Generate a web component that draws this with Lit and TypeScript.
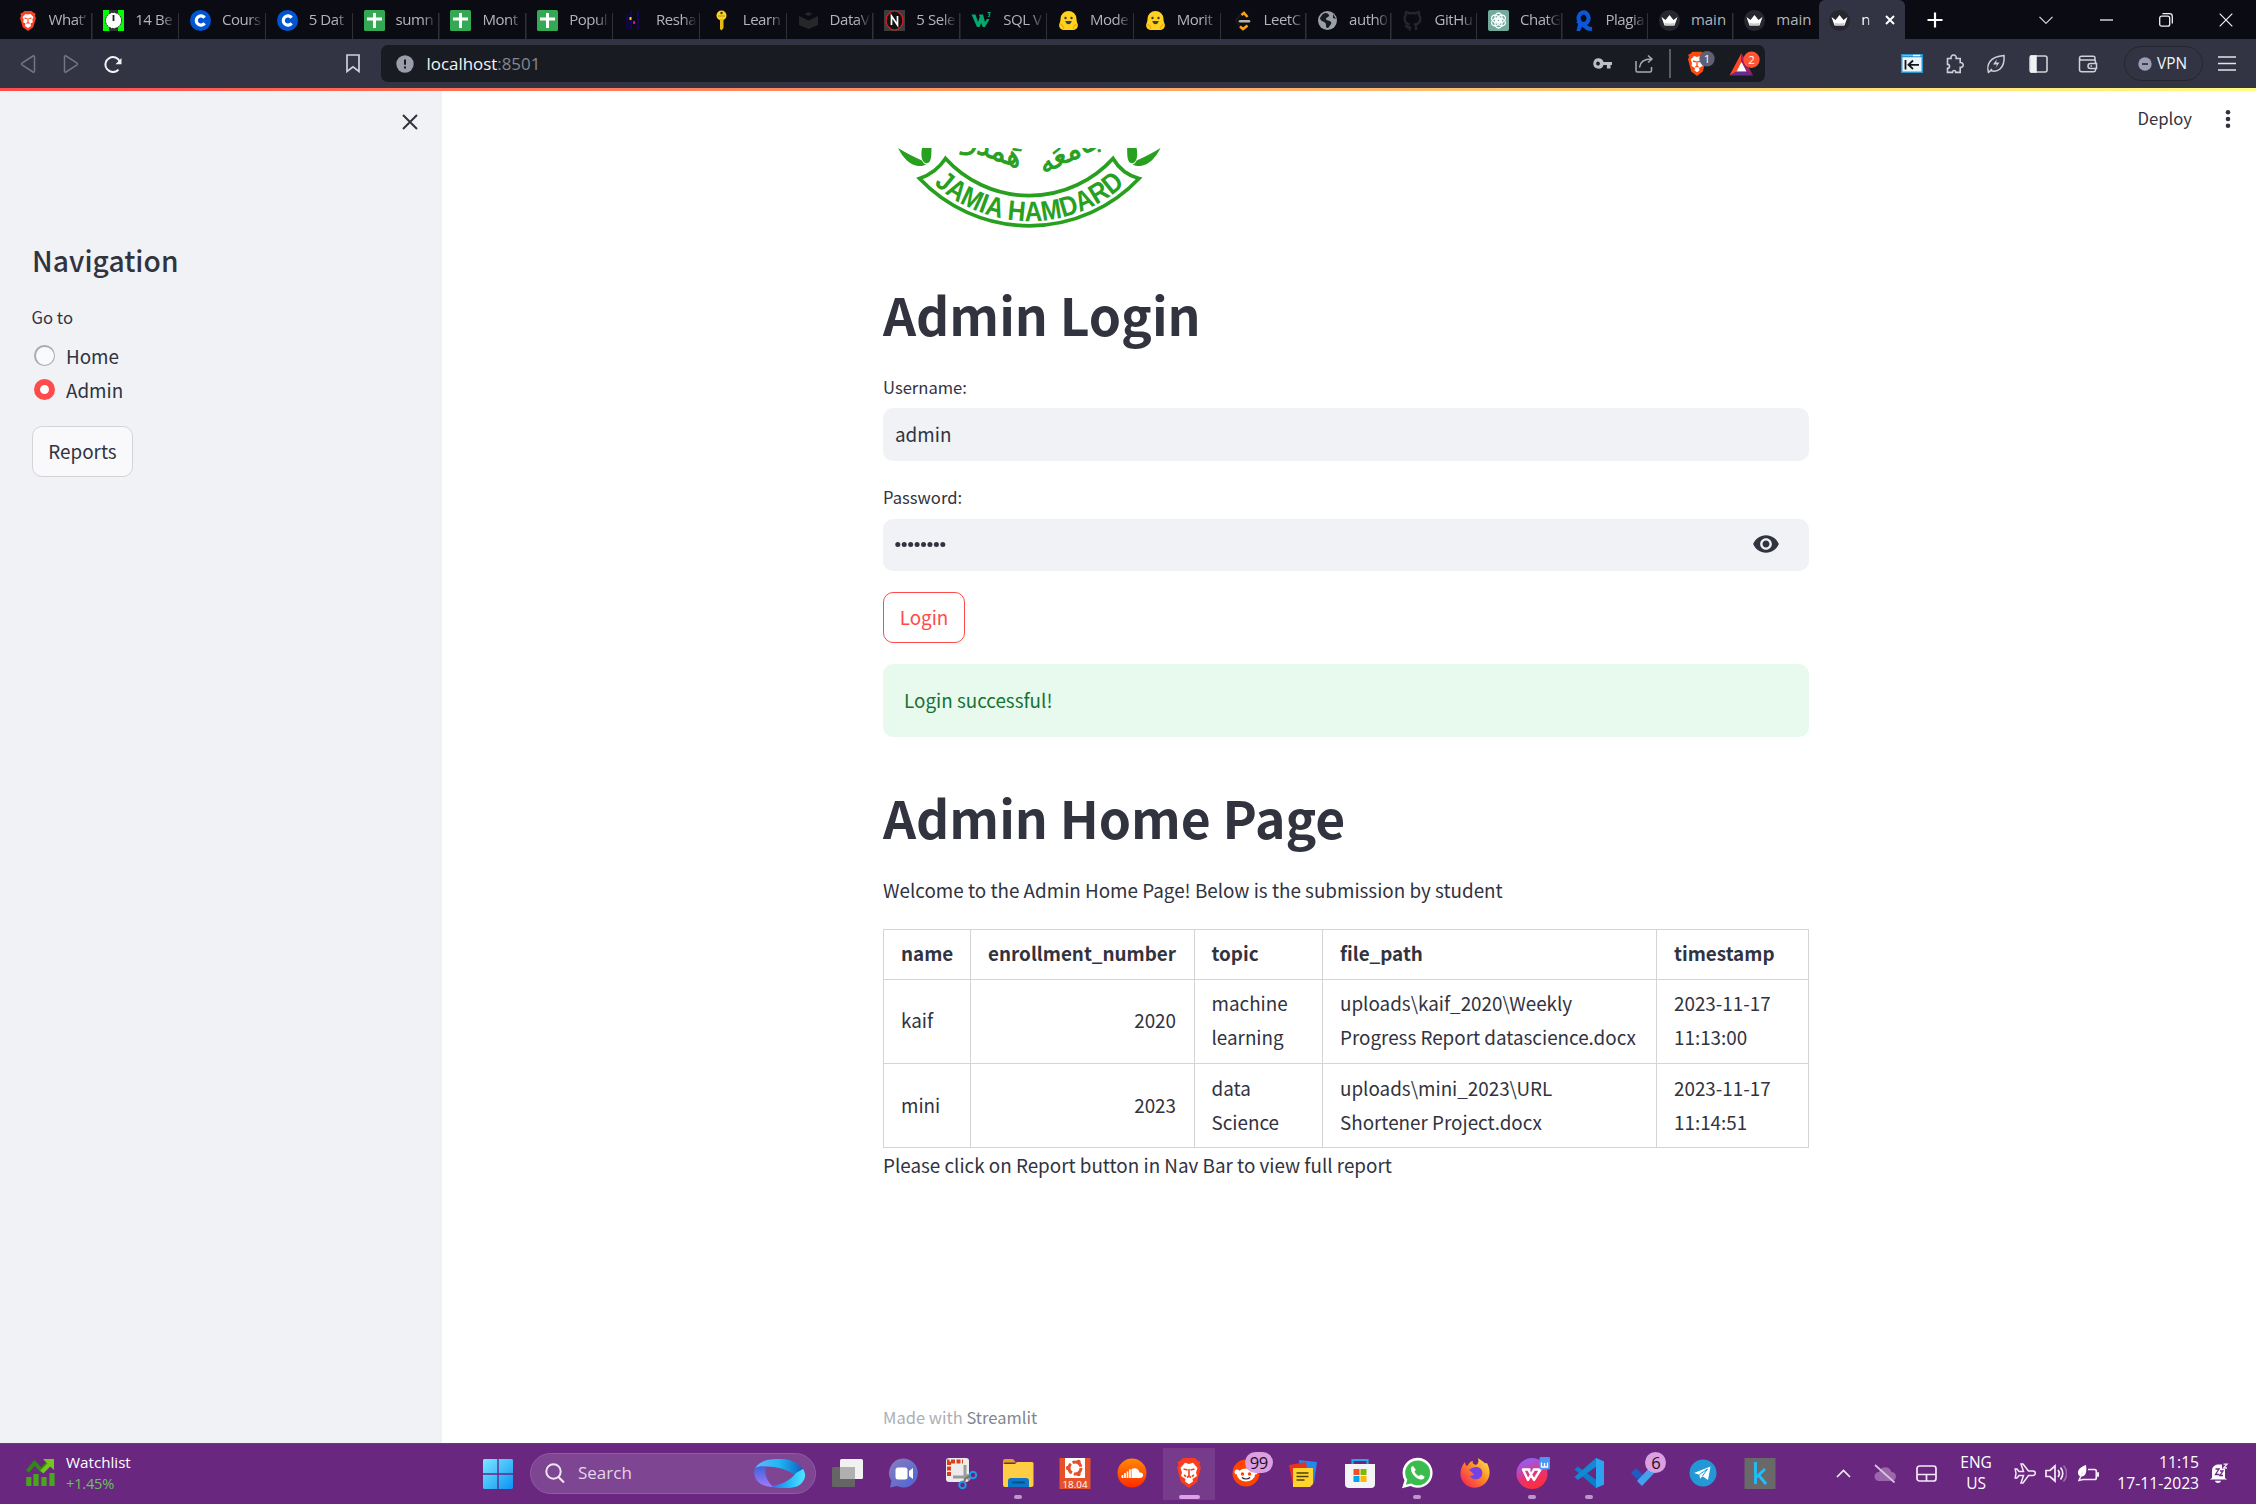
import { LitElement, html, svg, css, TemplateResult, SVGTemplateResult } from 'lit';
import { customElement } from 'lit/decorators.js';
import { classMap } from 'lit/directives/class-map.js';

const icon = (w: number, h: number, box: string, body: SVGTemplateResult, cls = 'ico') =>
  html`<svg class=${cls} width=${w} height=${h} viewBox=${box} fill="none">${body}</svg>`;

/* ---------- tab favicons, 21px square ---------- */
const lion = svg`<path d="M5 3 7.5 1h7L17 3l1.6.4L18 6l1 2-2.800 9.200L11 21l-5.200-3.800L3 8l1-2-.6-2.600z" fill="#fb4023"/><path d="M11 4.500 8.500 4 5.500 7l1.300 3L6 12l2.500 1.500L8 16l3 2 3-2-.5-2.500L16 12l-.8-2 1.300-3-3-3z" fill="#fff"/><path d="m7.500 8 2.200.6M14.500 8l-2.200.6M11 8v4.500l-1.500 1M11 12.500l1.500 1" stroke="#fb4023" stroke-width="1.100"/>`;
const cBadge = svg`<circle cx="10.500" cy="10.500" r="10.500" fill="#0056d2"/><path d="M14.600 7.800a4.600 4.600 0 1 0 0 5.400" stroke="#fff" stroke-width="3.200"/>`;
const sheet = svg`<rect width="21" height="21" rx="1.500" fill="#34a853"/><path d="M10.500 3v15M3 9h15" stroke="#fff" stroke-width="3"/>`;
const hug = svg`<path d="M10.500 1a8 8 0 0 1 8 8c0 2 .5 3 1.200 5 .8 3-1.200 5.500-4 6H5.300c-2.800-.5-4.800-3-4-6C2 12 2.500 11 2.500 9a8 8 0 0 1 8-8z" fill="#ffd21e"/><path d="M2.500 14c1.500 1 3 2 3.200 5M18.500 14c-1.500 1-3 2-3.200 5" stroke="#ff9d0b" stroke-width="1.200"/><circle cx="7.500" cy="8" r="1.200" fill="#3a3b45"/><circle cx="13.500" cy="8" r="1.200" fill="#3a3b45"/><path d="M7.300 11h6.400c-.3 2-1.500 3.200-3.200 3.200S7.600 13 7.300 11z" fill="#3a3b45"/>`;
const crown = svg`<circle cx="10.500" cy="10.500" r="10.500" fill="#26272f"/><path d="m2.500 7 4 3 4-5 4 5 4-3-3 8.500h-10z" fill="#fff"/><path d="m5.500 13 5 .5 5-.5-.5 2.500h-9z" fill="#c9c9cc"/>`;

const favicons: Record<string, SVGTemplateResult> = {
  lion, cBadge, sheet, hug, crown,
  watch: svg`<rect width="21" height="21" fill="#0f0"/><path d="M6 0h9v4H6zM6 17h9v4H6z" fill="#333"/><circle cx="10.500" cy="10.500" r="8" fill="#fff" stroke="#222" stroke-width="1" stroke-dasharray="2 1"/><path d="M10.500 5v6" stroke="#222" stroke-width="1.800"/>`,
  panda: svg`<path d="M3.500 5v14M7 1v19M14 1v19" stroke="#150458" stroke-width="2"/><rect x="5.500" y="7" width="2" height="3" fill="#ffca00"/><rect x="9" y="11" width="2" height="3" fill="#e70488"/>`,
  key: svg`<circle cx="10.500" cy="5.500" r="5" fill="#f8d32a"/><circle cx="10.500" cy="3" r="1.200" fill="#4a3a00"/><path d="M9 9h3.500v9l-2 2.500L9 19z" fill="#e3b912"/><path d="M7 6h7" stroke="#b8900a"/>`,
  book: svg`<path d="m10.500 2 4 2-4 2-4-2zM1 6l9.500 4.500L20 6v9l-9.500 4L1 15z" fill="#26272a"/>`,
  nTile: svg`<rect width="21" height="21" fill="#3c3c3e"/><ellipse cx="10.500" cy="10.500" rx="8.500" ry="9.500" fill="#111" stroke="#e31c23" stroke-width="1.200"/><path d="M7.500 15V6l6 9V6" stroke="#fff" stroke-width="1.700"/>`,
  w3: svg`<path d="M.5 4.500h4L7 12l1.800-5L8 4.500h4l2 7.500 2-3h2.500L14 17h-2.300l-1.500-4L8.500 17H6z" fill="#04aa6d"/><path d="M16.500 2.500h2.500l-1.200 1.700c1.500.4 1.200 2.500-.8 2.300" stroke="#04aa6d" stroke-width="1.100"/>`,
  leet: svg`<path d="m12.500 1-7.500 7.500c-1 1.200-1 3 0 4.200L9.500 18" stroke="#17171a" stroke-width="2.500"/><path d="m9.500 5 2.500-2 3.500 4M8 16.500l3 2.500 4.500-3.500" stroke="#ffa116" stroke-width="2.600"/><path d="M8 11.200h9" stroke="#b3b3b3" stroke-width="2.600" stroke-linecap="round"/>`,
  globe: svg`<circle cx="10.500" cy="10.500" r="9.500" fill="#9aa0a8"/><path d="M5 5c3-3 6-2 7 0s-3 2-3 4 4 1 5 3-1 3-2 5-3 1-3-1 0-3-2-4-4-2-4-4zM16 4l3 5-3-1z" fill="#191a22"/>`,
  github: svg`<path d="M7 20c1-.5 1-1 1-2.500-3 .3-4-1.500-4.500-2.500M14 20v-3.500c0-1-.2-1.500-.7-2 2.700-.4 5-1.600 5-6 0-1.500-.5-2.600-1.300-3.500.2-.7.200-2-.2-3-1.200 0-2.600.8-3.300 1.400a13 13 0 0 0-6 0C6.800 2.800 5.400 2 4.200 2c-.4 1-.4 2.300-.2 3C3.200 5.900 2.700 7 2.700 8.500c0 4.400 2.300 5.600 5 6" stroke="#24272e" stroke-width="2.400"/>`,
  gpt: svg`<rect width="21" height="21" rx="2" fill="#74aa9c"/><g stroke="#fff" stroke-width="1.300"><ellipse cx="10.500" cy="7.500" rx="3.500" ry="4.500"/><ellipse cx="10.500" cy="7.500" rx="3.500" ry="4.500" transform="rotate(60 10.500 10.500)"/><ellipse cx="10.500" cy="7.500" rx="3.500" ry="4.500" transform="rotate(120 10.500 10.500)"/><ellipse cx="10.500" cy="7.500" rx="3.500" ry="4.500" transform="rotate(180 10.500 10.500)"/><ellipse cx="10.500" cy="7.500" rx="3.500" ry="4.500" transform="rotate(240 10.500 10.500)"/><ellipse cx="10.500" cy="7.500" rx="3.500" ry="4.500" transform="rotate(300 10.500 10.500)"/></g>`,
  quill: svg`<path d="M10 14a5 5.800 0 1 1 4-1.500c-1 1-3 1.500-5 1.500l6 4.500 4 .5" stroke="#0b57d8" stroke-width="4.200"/><path d="m3.500 21 2-9 5 2-3.500 7z" fill="#0b57d8"/>`,
};

interface Tab { label: string; fav: string; }
const tabs: Tab[] = [
  ['What’', 'lion'], ['14 Be', 'watch'], ['Cours', 'cBadge'], ['5 Dat', 'cBadge'], ['sumn', 'sheet'],
  ['Mont', 'sheet'], ['Popul', 'sheet'], ['Resha', 'panda'], ['Learn', 'key'], ['DataV', 'book'],
  ['5 Sele', 'nTile'], ['SQL V', 'w3'], ['Mode', 'hug'], ['Morit', 'hug'], ['LeetC', 'leet'],
  ['auth0', 'globe'], ['GitHu', 'github'], ['ChatG', 'gpt'], ['Plagia', 'quill'], ['main', 'crown'], ['main', 'crown'],
].map(([label, fav]) => ({ label, fav }));

@customElement('browser-tabs')
export class BrowserTabs extends LitElement {
  static styles = css`
    :host { display: flex; height: 39px; background: #0b0b14; font: 15px/20px "Open Sans", sans-serif; color: #b4b4b9; }
    .tab { box-sizing: border-box; flex: none; display: flex; width: 86.800px; padding: 10px 0 0 10.500px; }
    .tab.first { width: 92.700px; padding-left: 16.500px; }
    .tab.slim { width: 85.480px; }
    .tab { background: linear-gradient(#303137, #303137) right 13px / 1.500px 26px no-repeat; }
    .tab.last { background: none; }
    .label { width: 41px; margin: -1px 0 0 11px; overflow: visible; white-space: nowrap; letter-spacing: -0.450px;
      -webkit-mask-image: linear-gradient(90deg, #000 66%, transparent); mask-image: linear-gradient(90deg, #000 66%, transparent); }
    .whole .label { letter-spacing: 0; -webkit-mask-image: none; mask-image: none; }
    .active { box-sizing: border-box; display: flex; width: 86px; padding: 10px 0 0 10px; background: #323443; border-radius: 6px 6px 0 0; color: #fff; }
    .active .label { width: 10px; margin-right: 14px; }
    .ctl { display: flex; align-items: center; justify-content: center; width: 60px; }
    .plus { margin-right: 51px; }
    .x { margin-top: 5px; }
    .win { stroke: #f0f0f2; stroke-width: 1.300; }
  `;
  render() {
    return html`
      ${tabs.map((t, i) => html`
        <div class=${classMap({ tab: true, first: i === 0, slim: i > 13, last: i === 20, whole: i > 18 })}>
          ${icon(21, 21, '0 0 21 21', favicons[t.fav])}
          <span class="label">${t.label}</span>
        </div>`)}
      <div class="active">${icon(21, 21, '0 0 21 21', crown)}<span class="label">n</span>
        ${icon(10, 10, '0 0 10 10', svg`<path d="m1 1 8 8M9 1 1 9" stroke="#fff" stroke-width="2"/>`, 'x')}</div>
      <div class="ctl plus">${icon(16, 16, '0 0 16 16', svg`<path d="M8 .5v15M.5 8h15" stroke="#fff" stroke-width="2.200"/>`)}</div>
      <div class="ctl">${icon(14, 8, '0 0 14 8', svg`<path d="m.5.8 6.500 6.500 6.500-6.500" stroke="#dcdce0" stroke-width="1.200"/>`)}</div>
      <div class="ctl">${icon(13, 4, '0 0 13 4', svg`<path d="M0 2h13" stroke="#f0f0f2" stroke-width="1.300"/>`)}</div>
      <div class="ctl">${icon(14, 14, '0 0 14 14', svg`<rect x=".7" y="3.200" width="10" height="10" rx="2"/><path d="M3.500.7h7a2.800 2.800 0 0 1 2.800 2.800v7" />`, 'ico win')}</div>
      <div class="ctl">${icon(14, 14, '0 0 14 14', svg`<path d="m.7.700 12.600 12.600M13.300.700.700 13.300" stroke="#f0f0f2" stroke-width="1.200"/>`)}</div>
    `;
  }
}

@customElement('browser-toolbar')
export class BrowserToolbar extends LitElement {
  static styles = css`
    :host { display: flex; box-sizing: border-box; height: 49px; padding: 6px 0 0 7px; background: #323443; font: 17.200px/37px "Open Sans", sans-serif; }
    .slot { flex: none; display: flex; align-items: center; justify-content: center; width: 42.500px; height: 37px; stroke: #d0d1d8; stroke-width: 1.500; }
    .dim { stroke: #727482; }
    .mark { margin-left: 197px; }
    .field { display: flex; align-items: center; box-sizing: border-box; width: 1384px; height: 37px; margin: 0 126.500px 0 6.500px; padding: 0 4px 0 15px; border-radius: 7px; background: #191b22; color: #f4f4f6; }
    .url { flex: 1; margin: -1px 0 0 13px; font-size: 16.900px; }
    .port { color: #85868e; }
    .f { display: flex; align-items: center; justify-content: center; width: 42.500px; }
    .rule { width: 1.500px; height: 29px; margin: 0 15px 0 3px; background: #5a5c64; }
    .shield { display: flex; margin-right: 14px; }
    .rewards { display: flex; padding-top: 2px; }
    .ext { width: 42px; }
    .wallet { margin-left: 8px; }
    .vpn { flex: none; box-sizing: border-box; display: flex; align-items: center; gap: 5px; width: 79px; height: 35px; margin: 1px 3px 0 15px; padding-left: 13px; border: 1.500px solid #24252f; border-radius: 18px; color: #f4f4f6; font-size: 15.400px; }
  `;
  render() {
    return html`
      <div class="slot dim">${icon(16, 18, '0 0 16 18', svg`<path d="M13 1 2 8.200a1 1 0 0 0 0 1.600L13 17c.7.400 1.500 0 1.500-.8V1.800C14.500 1 13.700.600 13 1z"/>`)}</div>
      <div class="slot dim">${icon(16, 18, '0 0 16 18', svg`<path d="m3 1 11 7.200a1 1 0 0 1 0 1.600L3 17c-.7.400-1.500 0-1.500-.8V1.800C1.500 1 2.300.600 3 1z"/>`)}</div>
      <div class="slot">${icon(19, 18, '0 0 19 18', svg`<path d="M14.500 14.600A7.500 7.500 0 1 1 16 7" stroke="#f2f2f4" stroke-width="2"/><path d="M17.500 3v6.200h-6z" fill="#f2f2f4" stroke="none"/>`)}</div>
      <div class="slot mark">${icon(14, 19, '0 0 14 19', svg`<path d="M1 1h12v16.500l-6-4.700-6 4.700z" stroke-width="1.700"/>`)}</div>
      <div class="field">
        ${icon(18, 18, '0 0 18 18', svg`<circle cx="9" cy="9" r="8.700" fill="#9b9da8"/><path d="M9 4.500v5.200M9 11.500v2" stroke="#191b22" stroke-width="2"/>`)}
        <span class="url">localhost<span class="port">:8501</span></span>
        <div class="f">${icon(19, 11, '0 0 19 11', svg`<path d="M5.500.3a5.200 5.200 0 0 1 5 3.700H19v3h-1.500v3.500h-3.600V7h-3.400A5.200 5.200 0 1 1 5.500.3zm0 3.400a1.900 1.900 0 1 0 0 3.700 1.900 1.900 0 0 0 0-3.700z" fill="#bdbec4"/>`)}</div>
        <div class="f">${icon(19, 19, '0 0 19 19', svg`<path d="M1 7v9.500c0 1 .5 1.500 1.500 1.500h12.500c1 0 1.500-.5 1.500-1.500V13M4.500 13.500c.5-5.500 4-8.500 12-8.500M13 1.500 17 5l-4 3.500" stroke="#a9aab2" stroke-width="1.500"/>`)}</div>
        <div class="rule"></div>
        <div class="shield">${icon(29, 26, '0 0 29 26', svg`<path d="M4 3 6.500.800h9L18 3l1.800.6-.8 2.600 1 2-3.200 12.300L11 25l-5.800-4.500L2 8.200l1-2-.8-2.600z" fill="#fb4b0d"/><path d="M11 6 8 5 4.700 8.500 6 12l-.5 3L9 17l-.5 2.500L11 21.300l2.500-1.800L13 17l3.500-2-.5-3 1.300-3.500L14 5z" fill="#fff"/><path d="m7 10 3 .8m5-.8-3 .8M11 10v5l-1.600 1.200M11 15l1.600 1.200" stroke="#fb4b0d" stroke-width="1.300"/><circle cx="21" cy="7.800" r="7.700" fill="#5e6175"/><text x="21" y="12" font-size="11.500" fill="#fff" text-anchor="middle">1</text>`)}</div>
        <div class="rewards">${icon(32, 28, '0 0 32 28', svg`<path d="M12.500 2v10.500L8 20.500.500 24.500z" fill="#ff4724"/><path d="M12.500 2 24 24.500l-7.300-4-4.200-8z" fill="#9e1f63"/><path d="m.5 24.500 7.500-4h9l7 4z" fill="#662d91"/><path d="m12.500 11 5 9.500h-10z" fill="#fff"/><circle cx="22.500" cy="8.800" r="8.200" fill="#ff5533"/><text x="22.500" y="13" font-size="11.500" fill="#fff" text-anchor="middle">2</text>`)}</div>
      </div>
      <div class="slot ext">${icon(22, 19, '0 0 22 19', svg`<rect x=".7" y=".7" width="20.600" height="17.600" fill="#e9f4f9" stroke="#2b93c9"/><path d="M1 2.500h20" stroke="#2b93c9" stroke-width="1.500"/><path d="M12 1.500h7" stroke="#fff"/><path d="M4.500 6v9.500M18 10.800H8M12 6.500 7.500 10.800 12 15" stroke="#151515" stroke-width="1.800"/>`)}</div>
      <div class="slot ext">${icon(20, 20, '0 0 20 20', svg`<path d="M3.500 4.500H7a2.700 2.700 0 1 1 5.200 0h4v4a2.500 2.500 0 1 1 0 4.900v5h-4.500c.3-2.600-3.300-2.600-3.200 0h-5v-4.200c2.700 0 2.700-3.600 0-3.800z" stroke-width="1.600"/>`)}</div>
      <div class="slot ext">${icon(20, 20, '0 0 20 20', svg`<path d="M2.500 18.500c-1-3-.8-8 1.500-11 3-4 8-5.500 14-6 .5 6-.5 10.500-4 13.500-3 2.500-6.500 2.500-9.500 1.500M2 19l4-4"/><path d="m11 5-4 5.500h4L9.500 14l4-5.500h-3.500z" fill="#d0d1d8" stroke="none"/>`)}</div>
      <div class="slot ext">${icon(19, 18, '0 0 19 18', svg`<rect x="1" y="1" width="17" height="16" rx="2" stroke-width="1.600"/><path d="M2 1h5v16H2z" fill="#f2f2f4" stroke="#f2f2f4"/>`)}</div>
      <div class="slot ext wallet">${icon(20, 18, '0 0 20 18', svg`<path d="M17 5V3c0-1-.7-1.800-1.800-1.800H3.500a2 2 0 0 0-2 1.800v11.500a2.300 2.300 0 0 0 2.300 2.300h12c1 0 1.700-.7 1.700-1.700v-1.500M1.500 3.200c0 1 1 1.800 2 1.800h12.200c1.200 0 1.800.6 1.800 1.700v1.500M18.500 8.500h-6a2.500 2.500 0 0 0 0 5h6z"/><path d="M12.500 11h1.500"/>`)}</div>
      <div class="vpn">${icon(14, 14, '0 0 14 14', svg`<circle cx="7" cy="7" r="6.700" fill="#9a9db3"/><path d="M4 7h6" stroke="#323443" stroke-width="1.800"/>`)}<span>VPN</span></div>
      <div class="slot ext">${icon(18, 15, '0 0 18 15', svg`<path d="M0 1h18M0 7.500h18M0 14h18" stroke="#e4e4e8"/>`)}</div>
    `;
  }
}

@customElement('side-nav')
export class SideNav extends LitElement {
  static styles = css`
    :host { flex: none; display: block; box-sizing: border-box; width: 442px; padding: 17px 25px 0 32px; background: #f0f2f6; color: #31333f; font: 18.840px/34px "Noto Sans CJK SC", sans-serif; }
    .top { display: flex; justify-content: flex-end; height: 28px; align-items: center; margin-right: -1px; }
    h2 { margin: 104px 0 0; height: 40px; font-size: 28.200px; line-height: 40px; font-weight: 500; letter-spacing: 0.050px; }
    .cap { height: 26px; margin: 23.500px 0 9px -0.500px; font-size: 16.700px; line-height: 26px; }
    .opt { display: flex; align-items: center; height: 34px; padding-left: 2px; gap: 11px; }
    .radio { box-sizing: border-box; width: 21px; height: 21px; border-radius: 50%; background: #fafafc; border: 1.500px solid #a9abb1; border-top-width: 2px; border-left-width: 2px; }
    .on { border: 6.500px solid #ff4b4b; background: #fff; }
    button { display: block; box-sizing: border-box; width: 101px; height: 51px; margin-top: 19.500px; padding: 0 0 1px; border: 1px solid #d3d4d8; border-radius: 10px; background: #f9f9fb; color: inherit; font: inherit; }
  `;
  render() {
    return html`
      <div class="top">${icon(16, 16, '0 0 16 16', svg`<path d="m1 1 14 14M15 1 1 15" stroke="#31333f" stroke-width="2"/>`)}</div>
      <h2>Navigation</h2>
      <div class="cap">Go to</div>
      <div class="opt"><span class="radio"></span>Home</div>
      <div class="opt"><span class="radio on"></span>Admin</div>
      <button>Reports</button>
    `;
  }
}

const rows = [
  ['kaif', '2020', 'machine\nlearning', 'uploads\\kaif_2020\\Weekly\nProgress Report datascience.docx', '2023-11-17\n11:13:00'],
  ['mini', '2023', 'data\nScience', 'uploads\\mini_2023\\URL\nShortener Project.docx', '2023-11-17\n11:14:51'],
];

@customElement('admin-page')
export class AdminPage extends LitElement {
  static styles = css`
    :host { flex: 1; display: block; background: #fff; color: #31333f; font: 18.840px/34px "Noto Sans CJK SC", sans-serif; }
    .header { display: flex; justify-content: flex-end; align-items: center; box-sizing: border-box; height: 57px; padding: 0 25px 2px 0; gap: 33px; font-size: 16.700px; }
    .header span { margin-top: -1px; }
    .block { width: 926px; margin-left: 441px; }
    .logo { display: block; overflow: hidden; }
    h1 { margin: 48.500px 0 0; height: 70px; font-size: 51.650px; line-height: 70px; font-weight: 700; }
    h1.second { margin-top: 45.500px; }
    .cap { height: 26px; margin-top: 25px; font-size: 16.600px; line-height: 26px; }
    .cap.pw { margin-top: 23px; }
    .input { display: flex; align-items: center; justify-content: space-between; box-sizing: border-box; height: 52.500px; margin-top: 8.500px; padding: 0 29px 1.500px 12px; border-radius: 10px; background: #f0f2f6; }
    .cap.pw + .input { margin-top: 9px; }
    button { display: block; box-sizing: border-box; width: 82px; height: 51px; margin-top: 20.500px; padding: 0 0 1px; border: 1px solid #ff4b4b; border-radius: 10px; background: #fff; color: #ff4b4b; font: inherit; }
    .alert { box-sizing: border-box; height: 73px; margin-top: 21px; padding: 19px 21px; border-radius: 10px; background: #e8f9ee; color: #177233; }
    p { margin: 0; height: 34px; }
    .intro { margin: 21px 0 21.500px; }
    table { width: 926px; border-collapse: collapse; table-layout: fixed; }
    th, td { box-sizing: border-box; padding: 6.500px 0 8px 17px; border: 1px solid #d3d4d7; text-align: left; vertical-align: middle; white-space: pre; }
    th { font-weight: 700; height: 50px; }
    td { height: 84.300px; }
    .num { text-align: right; padding: 6.500px 17.500px 8px 0; }
    .c0 { width: 87px; } .c1 { width: 223.500px; } .c2 { width: 128.500px; } .c3 { width: 334px; }
    .made { height: 26px; margin-top: 221.500px; font-size: 16.500px; line-height: 26px; color: #adaeb4; }
    .made span { color: #83858c; }
  `;
  private crest() {
    const side = svg`
      <path d="M15 0c5 10 12 17 20 18 4 .3 7-.7 8-1.500-2-.5-3-2-4-4C31 9 23 5 15 0z"/>
      <path d="M39 0h9.500c-.3 5 .3 9-1.500 13-1 2-3 2.500-4.500 2C39 14 37.500 8 39 0z"/>`;
    return html`<svg class="logo" width="300" height="82" viewBox="0 0 300 82" fill="#28a01f">
      <g>${side}</g><g transform="translate(292.600 0) scale(-1 1)">${side}</g>
      <path d="M62.500 10.500A113 113 0 0 0 230 10.500Q239 26 256 30.500A151 151 0 0 1 36.500 30.500Q53 25 62.500 10.500Z" fill="none" stroke="#28a01f" stroke-width="3.700"/>
      <path id="arc" d="M51 36A142 142 0 0 0 242.500 36" fill="none"/>
      <text font-family="Liberation Sans, sans-serif" font-weight="700" font-size="28"><textPath href="#arc" startOffset="0" textLength="209" lengthAdjust="spacingAndGlyphs">JAMIA HAMDARD</textPath></text>
      <g font-family="DejaVu Sans, sans-serif" font-size="28" direction="rtl" text-anchor="middle" stroke="#28a01f" stroke-width=".9">
        <text transform="translate(102 8) rotate(20)">هَمدَرد</text>
        <text transform="translate(192 11) rotate(-26)">جامعَه</text>
      </g>
    </svg>`;
  }
  render() {
    return html`
      <div class="header"><span>Deploy</span>${icon(6, 20, '0 0 6 20', svg`<g fill="#31333f"><circle cx="3" cy="3.200" r="2.300"/><circle cx="3" cy="10" r="2.300"/><circle cx="3" cy="16.800" r="2.300"/></g>`)}</div>
      <div class="block">
        ${this.crest()}
        <h1>Admin Login</h1>
        <div class="cap">Username:</div>
        <div class="input"><span>admin</span></div>
        <div class="cap pw">Password:</div>
        <div class="input">
          ${icon(52, 8, '0 0 52 8', svg`<g fill="#31333f">${[0, 1, 2, 3, 4, 5, 6, 7].map(i => svg`<circle cx=${2.8 + i * 6.430} cy="4.500" r="2.500"/>`)}</g>`)}
          ${icon(28, 28, '0 0 24 24', svg`<path fill="#31333f" d="M12 4.500C7 4.500 2.730 7.610 1 12c1.730 4.390 6 7.500 11 7.500s9.270-3.110 11-7.500c-1.730-4.390-6-7.500-11-7.500zM12 17c-2.760 0-5-2.240-5-5s2.240-5 5-5 5 2.240 5 5-2.240 5-5 5zm0-8c-1.660 0-3 1.340-3 3s1.340 3 3 3 3-1.340 3-3-1.340-3-3-3z"/>`)}
        </div>
        <button>Login</button>
        <div class="alert">Login successful!</div>
        <h1 class="second">Admin Home Page</h1>
        <p class="intro">Welcome to the Admin Home Page! Below is the submission by student</p>
        <table>
          <tr><th class="c0">name</th><th class="c1 num">enrollment_number</th><th class="c2">topic</th><th class="c3">file_path</th><th>timestamp</th></tr>
          ${rows.map(r => html`<tr>${r.map((c, i) => html`<td class=${i === 1 ? 'num' : ''}>${c}</td>`)}</tr>`)}
        </table>
        <p>Please click on Report button in Nav Bar to view full report</p>
        <div class="made">Made with <span>Streamlit</span></div>
      </div>
    `;
  }
}

/* ---------- taskbar app icons, 32px box ---------- */
interface App { art: SVGTemplateResult; running?: boolean; active?: boolean; badge?: string; }
const apps: App[] = [
  { art: svg`<rect x="9" y="2" width="23" height="20" rx="1.500" fill="#f1f1f1"/><rect x="1" y="10" width="23" height="20" rx="1.500" fill="#656565"/><path d="M9 10h15v12H9z" fill="#b0b0b0"/>` },
  { art: svg`<defs><linearGradient id="chat" x2="1" y2="1"><stop stop-color="#8a7fbb"/><stop offset="1" stop-color="#4a63d8"/></linearGradient></defs><path d="M16 1.500A14.500 14.500 0 1 1 9 29l-7 1.500L3.500 24A14.500 14.500 0 0 1 16 1.500z" fill="url(#chat)"/><rect x="7.500" y="10.500" width="12" height="12" rx="2.500" fill="#fff"/><path d="m21 14 4-3v11l-4-3z" fill="#fff"/>` },
  { art: svg`<rect x="1" y="1" width="23" height="24" rx="3" fill="#ececec"/><path d="M4 19V4.500h14" stroke="#d8401c" stroke-width="4" stroke-dasharray="4 1.500"/><path d="M20 8v12l4-2M8 20h14l3 3" stroke="#9b9b9b" stroke-width="3"/><circle cx="28" cy="18" r="3.200" stroke="#1a9be6" stroke-width="2"/><circle cx="17.500" cy="28" r="3.200" stroke="#1a9be6" stroke-width="2"/><path d="m24.500 19-4 2.500L19 25" stroke="#777" stroke-width="2"/>` },
  { running: true, art: svg`<path d="M1 4c0-1.200.8-2 2-2h8l3 3.500H2.500L1 10z" fill="#e2a30c"/><path d="M1 7h12l2-2h15a1.500 1.500 0 0 1 1.500 1.500V28a2 2 0 0 1-2 2H3a2 2 0 0 1-2-2z" fill="#fdcd45"/><path d="M6 30v-6a3 3 0 0 1 3-3h15a3 3 0 0 1 3 3v6z" fill="#0c76c9"/><path d="M11 25.500h11" stroke="#064f8e" stroke-width="2" stroke-linecap="round"/>` },
  { art: svg`<rect x=".5" y="1" width="31" height="31" fill="#e6512a"/><rect x="6" y="1" width="20" height="20" fill="#fff"/><circle cx="16" cy="11" r="6" stroke="#e6512a" stroke-width="3" stroke-dasharray="10.500 2"/><circle cx="9" cy="11" r="2.200" fill="#e6512a"/><circle cx="19.500" cy="5" r="2.200" fill="#e6512a"/><circle cx="19.500" cy="17" r="2.200" fill="#e6512a"/><text x="16" y="31" font-size="9.800" fill="#fff" text-anchor="middle">18.04</text>` },
  { art: svg`<defs><linearGradient id="snd" x2="0" y2="1"><stop stop-color="#ff8a00"/><stop offset="1" stop-color="#ff2a00"/></linearGradient></defs><circle cx="16" cy="16" r="14.500" fill="url(#snd)"/><path d="M6.500 18v3M9 16v5M11.500 14.500V21M14 12.500V21" stroke="#fff" stroke-width="1.700"/><path d="M15.500 12c4-2 7.500.3 8 3.500 5-.5 4.500 5.500.5 5.500h-8.500z" fill="#fff"/>` },
  { active: true, art: svg`<path d="M7 4 10 1h12l3 3 2.500.7L26.500 8l1.500 2.500-4 14.500L16 31l-8-6L4 10.500 5.500 8l-1-3.300z" fill="#fb3d1e"/><path d="m16 7-4-1.200L7.500 11 9 15.500 8 19l4.500 3-.5 2.500 4 2.800 4-2.800-.5-2.500 4.500-3-1-3.500 1.500-4.500L20 5.800z" fill="#fff"/><path d="m10.500 12 4 1m7-1-4 1M16 12v7l-2 1.500M16 19l2 1.500M11 18l2 1.500m8-1.500-2 1.500" stroke="#fb3d1e" stroke-width="1.600"/>` },
  { badge: '99', art: svg`<circle cx="16" cy="16" r="13.500" fill="#ff4500"/><ellipse cx="16" cy="18" rx="9" ry="6.500" fill="#fff"/><circle cx="7" cy="15" r="2.500" fill="#fff"/><circle cx="25" cy="15" r="2.500" fill="#fff"/><circle cx="12.500" cy="17" r="1.700" fill="#ff4500"/><circle cx="19.500" cy="17" r="1.700" fill="#ff4500"/><path d="M12 20.500c2 2 6 2 8 0" stroke="#222" stroke-width="1.200"/>` },
  { art: svg`<path d="m12 3 18 2-3 21-14-2z" fill="#2388f0"/><path d="m2 8 17-3 3 20-16 3z" fill="#e8311e"/><path d="M6 11h20v16l-3 3H6z" fill="#ffd42e"/><path d="M9.500 16h12M9.500 19.500h12M9.500 23h8" stroke="#4c4000" stroke-width="1.400"/>` },
  { art: svg`<path d="M8.500 8V3h15v5" stroke="#1fa9ea" stroke-width="2.200"/><path d="M1 7h30v20a4 4 0 0 1-4 4H5a4 4 0 0 1-4-4z" fill="#f4f4f6"/><path d="M9.500 12h6v6h-6z" fill="#f25022"/><path d="M16.500 12h6v6h-6z" fill="#7fba00"/><path d="M9.500 19h6v6h-6z" fill="#00a4ef"/><path d="M16.500 19h6v6h-6z" fill="#ffb900"/>` },
  { running: true, art: svg`<path d="M16.500.800a15 15 0 1 1-7 28.200L1 31.200l2.500-8A15 15 0 0 1 16.500.800z" fill="#fff"/><path d="M16.500 3.500a12.400 12.400 0 1 1-6.300 22.900l-5.400 1.400 1.500-5A12.400 12.400 0 0 1 16.500 3.500z" fill="#3bbd4e"/><path d="M12 9c-1.500.3-2.500 2-2 4 1 4.500 5 8.500 9.500 9.500 2.500.5 4-1 4-3l-3.500-2-2 1.500c-2.200-.8-4-2.800-4.500-4.500l1.300-1.700z" fill="#fff"/>` },
  { art: svg`<defs><linearGradient id="fox" x1="1" x2="0" y2="1"><stop stop-color="#fff04a"/><stop offset=".45" stop-color="#ff8a26"/><stop offset="1" stop-color="#f7145c"/></linearGradient></defs><path d="M19 1c6 4 7 6 9 5 3 6 4 12 0 18C22 33 8 33 3 23 0 17 2 9 6 5c0 2 1 3.500 2 4 2-2 3-5 6-5-1 2 0 3 3 4 2-1 3-3 2-7z" fill="url(#fox)"/><path d="M17 10c6 0 8 6 5 10-3 3.500-9 3-11-1l4-1c-2-3-4-4-5-5 2-2 5-3 7-3z" fill="#7542e5"/>` },
  { running: true, art: svg`<defs><linearGradient id="wps" x1=".3" x2=".7" y2="1"><stop stop-color="#8a63ff"/><stop offset=".6" stop-color="#ee2f6e"/><stop offset="1" stop-color="#ff3030"/></linearGradient></defs><circle cx="16" cy="16.500" r="15.500" fill="url(#wps)"/><path d="M13.500 12.500H7l5 10.500 6-10.500M13 14l5 9 6.500-10.500H18" stroke="#fff" stroke-width="2.400" stroke-linejoin="round" stroke-linecap="round"/><rect x="23.500" y="0" width="10.500" height="12.500" rx="1" fill="#4c96f5"/><path d="M25.500 5.500v4.500h6V5.500M28.500 6v4" stroke="#fff" stroke-width="1.300"/>` },
  { running: true, art: svg`<path d="m23 1 8 3.500v23L23 31 1.500 12.500l3.300-3L24 23.500z" fill="#0b7dca"/><path d="M23 1 1.500 20l3.300 3L24 9z" fill="#1588d4"/><path d="m23 1 8 3.500v23L23 31z" fill="#2ba4f2"/>` },
  { badge: '6', art: svg`<path d="m1 16 5-5 8 8-5 5z" fill="#1f5bc0"/><path d="m7 24 16-17 5 5L12 29z" fill="#45a1ee"/>` },
  { art: svg`<circle cx="16" cy="16" r="13.500" fill="#2299d6"/><path d="M7 16 23.500 9.500 21 23l-5.500-3.800-2.500 2.500-.5-4z" fill="#fff"/><path d="m12.500 17.500 8-5.500-5 7" stroke="#2299d6"/>` },
  { art: svg`<rect x=".5" y="1" width="31" height="31" fill="#696969"/><path d="M11.500 5v22M21 12l-9 8.500M14.500 18l7.500 9" stroke="#20beff" stroke-width="2.800"/>` },
];

@customElement('task-bar')
export class TaskBar extends LitElement {
  static styles = css`
    :host { display: flex; box-sizing: border-box; height: 61px; border-top: 1px solid #64406f; background: #692780; color: #fff; font: 15.500px/21px "Open Sans", sans-serif; }
    .watch { box-sizing: border-box; display: flex; width: 483px; padding: 8px 0 0 26px; gap: 11px; font-size: 15.200px; }
    .watch svg { margin-top: 6px; }
    .gain { color: #6cc25e; font-size: 14.600px; letter-spacing: -0.200px; }
    .start { margin-top: 14.500px; }
    .search { box-sizing: border-box; display: flex; align-items: center; flex: none; width: 286px; height: 41.500px; margin: 8.500px 2px 0 17px; padding: 0 10px 0 14px; gap: 13px; border: 1px solid #8f5ba2; border-radius: 21px; background: #7e4592; color: #e3d6e8; font-size: 17px; }
    .search span { flex: 1; margin-top: -1px; }
    .slot { position: relative; flex: none; display: flex; flex-direction: column; align-items: center; width: 57.100px; height: 59px; }
    .slot svg { margin-top: 13px; overflow: visible; }
    .bar { width: 8px; height: 4px; margin-top: 6px; border-radius: 2px; background: #bf96cb; }
    .hot { background: linear-gradient(#763b8b, #763b8b) center 4px / 52px 52px no-repeat; }
    .hot .bar { width: 21px; background: #e0a0e8; }
    .badge { position: absolute; top: 7.500px; left: 28px; min-width: 21px; box-sizing: border-box; padding: 0 4px; border-radius: 11px; background: #dc9fe2; color: #201020; text-align: center; font-size: 16.500px; letter-spacing: -0.300px; }
    .wide { padding: 0 5px; left: 27px; }
    .tray { display: flex; align-items: center; margin-left: 36.500px; height: 59px; stroke-width: 1.700; }
    .t { flex: none; display: flex; justify-content: center; }
    .a { width: 36px; } .b { width: 48px; } .c { width: 34px; } .lang { width: 66px; text-align: center; }
    .d { width: 32px; } .e { width: 30px; } .f { width: 33px; }
    .lang, .clock { margin-top: -1px; }
    .clock { width: 95px; text-align: right; font-size: 15.700px; }
    .g { width: 40px; }
    .stroke { stroke: #f3eaf6; }
  `;
  private app(a: App): TemplateResult {
    return html`<div class=${classMap({ slot: true, hot: !!a.active })}>
      ${icon(32, 32, '0 0 32 32', a.art)}
      ${a.running || a.active ? html`<i class="bar"></i>` : ''}
      ${a.badge ? html`<span class=${classMap({ badge: true, wide: a.badge.length > 1 })}>${a.badge}</span>` : ''}
    </div>`;
  }
  render() {
    return html`
      <div class="watch">
        ${icon(29, 29, '0 0 29 29', svg`<path d="M2.800 19v9M10 16v12M18 19v9M26 15v13" stroke="#49a51a" stroke-width="5.200"/><path d="m1.500 13.500 7-8.500 6.500 7 9-9" stroke="#2f8a14" stroke-width="3.800"/><path d="M17 1h11v11l-3.700-3.500-7 7-3-3 7-7z" fill="#74c818"/>`)}
        <div><div>Watchlist</div><div class="gain">+1.45%</div></div>
      </div>
      ${icon(30, 30, '0 0 30 30', svg`<defs><linearGradient id="win" gradientUnits="userSpaceOnUse" x2="30" y2="30"><stop stop-color="#7ae8ff"/><stop offset="1" stop-color="#0a93f5"/></linearGradient></defs><path d="M1 0h13.300v14.300H0V1zM15.700 0H29l1 1v13.300H15.700zM0 15.700h14.300V30H1l-1-1zM15.700 15.700H30V29l-1 1H15.700z" fill="url(#win)"/>`, 'start')}
      <div class="search">
        ${icon(20, 21, '0 0 20 21', svg`<circle cx="8.500" cy="8.500" r="7.200" stroke="#efe6f2" stroke-width="2"/><path d="m13.500 14 5.500 5.500" stroke="#efe6f2" stroke-width="2.200"/>`)}
        <span>Search</span>
        ${icon(51, 29, '0 0 51 29', svg`<defs><linearGradient id="b1" x2="1"><stop stop-color="#6fb0ff"/><stop offset=".5" stop-color="#20b7f5"/><stop offset="1" stop-color="#1060c0"/></linearGradient><linearGradient id="b2" x2="1"><stop stop-color="#3d5fe8"/><stop offset=".5" stop-color="#22b4f8"/><stop offset="1" stop-color="#4fe6ff"/></linearGradient><linearGradient id="b3" x2="0" y2="1"><stop stop-color="#3f63d8"/><stop offset="1" stop-color="#a07aff"/></linearGradient></defs>
          <path d="M1 9C6 2 14 0 22 0h8c8 1 14 4 19 10l-8 6C32 10 18 5 1 9z" fill="url(#b1)"/>
          <path d="M49 10c4 6 2 13-5 17-8 3-22 3-28 0 11-1 20-5 26-13z" fill="url(#b2)"/>
          <path d="M1 9c4-2 8-2 11-1-2 6 0 13 7 20C10 28 3 24 1 18c-1-3-1-6 0-9z" fill="url(#b3)"/>`)}
      </div>
      ${apps.map(a => this.app(a))}
      <div class="tray stroke">
        <div class="t a">${icon(15, 9, '0 0 15 9', svg`<path d="m1 8 6.500-6.500L14 8"/>`)}</div>
        <div class="t b">${icon(22, 19, '0 0 22 19', svg`<path d="M5 17a4.500 4.500 0 0 1 0-9 6.500 6.500 0 0 1 12.500 0 4.500 4.500 0 0 1 0 9z" fill="#9b66aa" stroke="none"/><path d="m1 1 19.500 17.500" stroke="#d9c6e0"/>`)}</div>
        <div class="t c">${icon(21, 17, '0 0 21 17', svg`<rect x="1" y="1" width="19" height="15" rx="2.500"/><path d="M1 9.500h19M10.500 9.500V16"/>`)}</div>
        <div class="lang">ENG<br>US</div>
        <div class="t d">${icon(22, 21, '0 0 22 21', svg`<path d="M7 1h2l5.500 7H19a2.200 2.200 0 0 1 0 4.500h-4.500L9 20H7l2.500-7.500H5L3 15H1.200L2 10.500 1.200 6H3l2 2.500h4.500z" stroke-width="1.500"/>`)}</div>
        <div class="t e">${icon(22, 19, '0 0 22 19', svg`<path d="M1 6.500h4L10 2v15l-5-4.500H1z"/><path d="M13 6c1.500 2 1.500 5 0 7M15.500 3.500c3 3.500 3 8.500 0 12"/><path d="M18.500 1.500c4 5 4 11 0 16" stroke="#9868a8"/>`)}</div>
        <div class="t f">${icon(22, 19, '0 0 22 19', svg`<path d="M11 5.500h6.500c1 0 1.800.8 1.800 1.800v6.400c0 1-.8 1.800-1.800 1.800H6M20 9v3h1.500V9z"/><path d="M9 1C3 3 .5 6 1 9.500c.3 2 1.800 3 3.500 3C9 12.500 10 7 9 1z" fill="#fff" stroke="none"/><path d="m6 7-4 9.500 4-1" stroke-width="1.500"/>`)}</div>
        <div class="clock">11:15<br>17-11-2023</div>
        <div class="t g">${icon(20, 21, '0 0 20 21', svg`<path d="M3 15V8c0-4 2.500-6 5.500-6.500H13V6h3v9l2 1.500H.800z" fill="#fff" stroke="none"/><path d="M6 17.800h6c-.5 3-5.500 3-6 0z" fill="#fff" stroke="none"/><path d="M6.500 6h3.500l-3.500 5.500h4M11 8h3l-3 4.500h3" stroke="#692780" stroke-width="1.300"/><path d="M14.500 1.200H18L14.500 5H18" stroke-width="1.300"/>`)}</div>
      </div>
    `;
  }
}

@customElement('app-root')
export class AppRoot extends LitElement {
  static styles = css`
    :host { display: flex; flex-direction: column; width: 2256px; height: 1504px; overflow: hidden; }
    .glow { flex: none; height: 3px; background: linear-gradient(90deg, #ff4b4b, #fffd80); }
    .view { display: flex; flex: 1; min-height: 0; overflow: hidden; }
    browser-tabs, browser-toolbar, task-bar { flex: none; }
  `;
  render() {
    return html`
      <browser-tabs></browser-tabs>
      <browser-toolbar></browser-toolbar>
      <div class="glow"></div>
      <div class="view"><side-nav></side-nav><admin-page></admin-page></div>
      <task-bar></task-bar>
    `;
  }
}
